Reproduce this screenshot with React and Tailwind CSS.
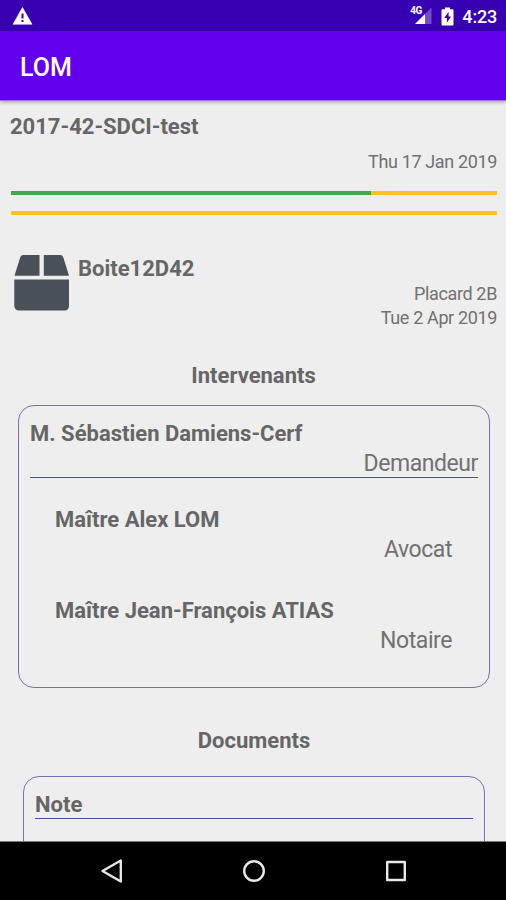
import React from 'react';

const people = [
  { name: 'Maître Alex LOM', role: 'Avocat' },
  { name: 'Maître Jean-François ATIAS', role: 'Notaire' },
];

function StatusBar() {
  return (
    <div className="h-[31px] shrink-0 bg-[#3700b3] flex items-center justify-between pl-[12px] pr-[9px] text-white">
      <svg width="21" height="18" viewBox="0 0 21 18" className="mt-[1px]">
        <path d="M10.5 0.5 L20 17.2 H1 Z" fill="#fff" stroke="#fff" strokeWidth="0.6" strokeLinejoin="round" />
        <path d="M9.5 6.5h2v5h-2z M9.5 13h2v2.1h-2z" fill="#3700b3" />
      </svg>
      <div className="flex items-center">
        <div className="relative w-[23px] h-[18px] mr-[9px] mt-[1px]">
          <svg width="23" height="18" viewBox="0 0 23 18">
            <path d="M22.500 0.500 V17 H6 Z" fill="#fff" fillOpacity="0.3" />
            <path d="M16 7 V17 H6 Z" fill="#fff" />
          </svg>
          <span className="absolute left-[1px] top-[-1px] text-[10px] leading-[10px] font-bold tracking-[-0.5px]">4G</span>
        </div>
        <svg width="13" height="19" viewBox="0 0 13 19" className="mr-[8px] mt-[1px]">
          <path d="M4 0.5h5v1.8h2.2c.8 0 1.3.5 1.3 1.2v13.7c0 .8-.5 1.3-1.3 1.3H1.8c-.8 0-1.3-.5-1.3-1.3V3.500c0-.7.5-1.200 1.300-1.200H4z" fill="#fff" />
          <path d="M7.600 4.800 L3.200 11.100 H5.900 V15.800 L10 9.400 H7.600 Z" fill="#3700b3" />
        </svg>
        <span className="text-[18px] tracking-[-0.2px] leading-[31px] font-medium mt-[2px]">4:23</span>
      </div>
    </div>
  );
}

function AppBar() {
  return (
    <div className="relative z-10 h-[70px] shrink-0 bg-[#6200ee] flex items-center pl-[20px] border-b border-[#9a74dc] shadow-[0_1px_4px_rgba(0,0,0,0.35)]">
      <h1 className="text-white text-[25px] leading-[30px] font-medium mt-[5px]">LOM</h1>
    </div>
  );
}

function Progress({ value, className }) {
  return (
    <div className={`h-[4px] bg-[#ffc11e] ${className}`}>
      <div className="h-full bg-[#43a84c]" style={{ width: `${value}%` }} />
    </div>
  );
}

function BoxIcon() {
  return (
    <svg width="56" height="58" viewBox="0 0 56 58" fill="#495057">
      <path d="M9.500 1H25.500V21.800H0.500L6 4C6.600 2 7.600 1 9.500 1Z" />
      <path d="M29.800 1H46.200C48.100 1 48.900 2 49.500 4L55 21.800H29.800Z" />
      <path d="M0.300 25.500H55V51.800C55 54.800 53.300 56.500 50.800 56.500H4.800C2.300 56.500 0.300 54.800 0.300 51.800Z" />
    </svg>
  );
}

function NavBar() {
  return (
    <div className="h-[59px] shrink-0 bg-black flex items-center justify-center gap-[118px] pl-[2px] border-t border-[#777]">
      <svg width="24" height="26" viewBox="0 0 24 26" fill="none" stroke="#e8e8e8" strokeWidth="2.400" strokeLinejoin="round">
        <path d="M20.800 2.500 V23.500 L2.500 13 Z" />
      </svg>
      <svg width="24" height="26" viewBox="0 0 24 26" fill="none" stroke="#e8e8e8" strokeWidth="2.400">
        <circle cx="12" cy="13" r="9.800" />
      </svg>
      <svg width="24" height="26" viewBox="0 0 24 26" fill="none" stroke="#e8e8e8" strokeWidth="2.400" strokeLinejoin="round">
        <rect x="3.200" y="4" width="17.600" height="18" />
      </svg>
    </div>
  );
}

export default function App() {
  return (
    <div className="w-[506px] h-[900px] overflow-hidden flex flex-col bg-[#eeeeee] text-[#666666] font-['Roboto',sans-serif]">
      <StatusBar />
      <AppBar />

      <main className="flex-1 min-h-0 overflow-hidden pt-[13px]">
        {/* Case summary */}
        <section className="pl-[11px] pr-[9px]">
          <h2 className="text-[22px] leading-[26px] font-bold -ml-[1px]">2017-42-SDCI-test</h2>
          <p className="mt-[10px] text-[18px] tracking-[-0.36px] leading-[24px] text-right text-[#717171]">Thu 17 Jan 2019</p>
          <Progress value={74} className="mt-[17px]" />
          <Progress value={0} className="mt-[16px]" />
        </section>

        {/* Storage box */}
        <section className="flex pl-[10px] pr-[9px] mt-[39px]">
          <div className="ml-[4px] mr-[8px]">
            <BoxIcon />
          </div>
          <div className="flex-1">
            <h2 className="mt-[2px] text-[22px] leading-[26px] font-bold">Boite12D42</h2>
            <p className="text-[18px] tracking-[-0.36px] leading-[24px] text-right text-[#717171]">Placard 2B</p>
            <p className="text-[18px] tracking-[-0.36px] leading-[24px] text-right text-[#717171]">Tue 2 Apr 2019</p>
          </div>
        </section>

        <h2 className="mt-[33px] ml-[1px] text-[22px] leading-[26px] font-bold text-center">Intervenants</h2>
        <section className="ml-[18px] mr-[16px] mt-[16px] h-[283px] rounded-[16px] border border-[#7371b8] pl-[11px] pr-[11px] pt-[15px]">
          <div className="border-b border-[#4f4da2] h-[57px]">
            <h3 className="text-[22px] leading-[26px] font-bold">M. Sébastien Damiens-Cerf</h3>
            <p className="mt-[3px] text-[23px] tracking-[-0.42px] leading-[27px] text-right text-[#717171]">Demandeur</p>
          </div>
          {people.map((p) => (
            <div key={p.name} className="pl-[25px] pr-[26px] pt-[29px] h-[91px]">
              <h3 className="text-[22px] leading-[26px] font-bold">{p.name}</h3>
              <p className="mt-[3px] text-[23px] tracking-[-0.42px] leading-[27px] text-right text-[#717171]">{p.role}</p>
            </div>
          ))}
        </section>

        <h2 className="mt-[40px] ml-[2px] text-[22px] leading-[26px] font-bold text-center">Documents</h2>
        <section className="ml-[23px] mr-[21px] mt-[22px] h-[120px] rounded-[16px] border border-[#7371b8] px-[11px] pt-[15px]">
          <h3 className="h-[27px] border-b border-[#4f4da2] text-[22px] leading-[26px] font-bold">Note</h3>
        </section>
      </main>

      <NavBar />
    </div>
  );
}
